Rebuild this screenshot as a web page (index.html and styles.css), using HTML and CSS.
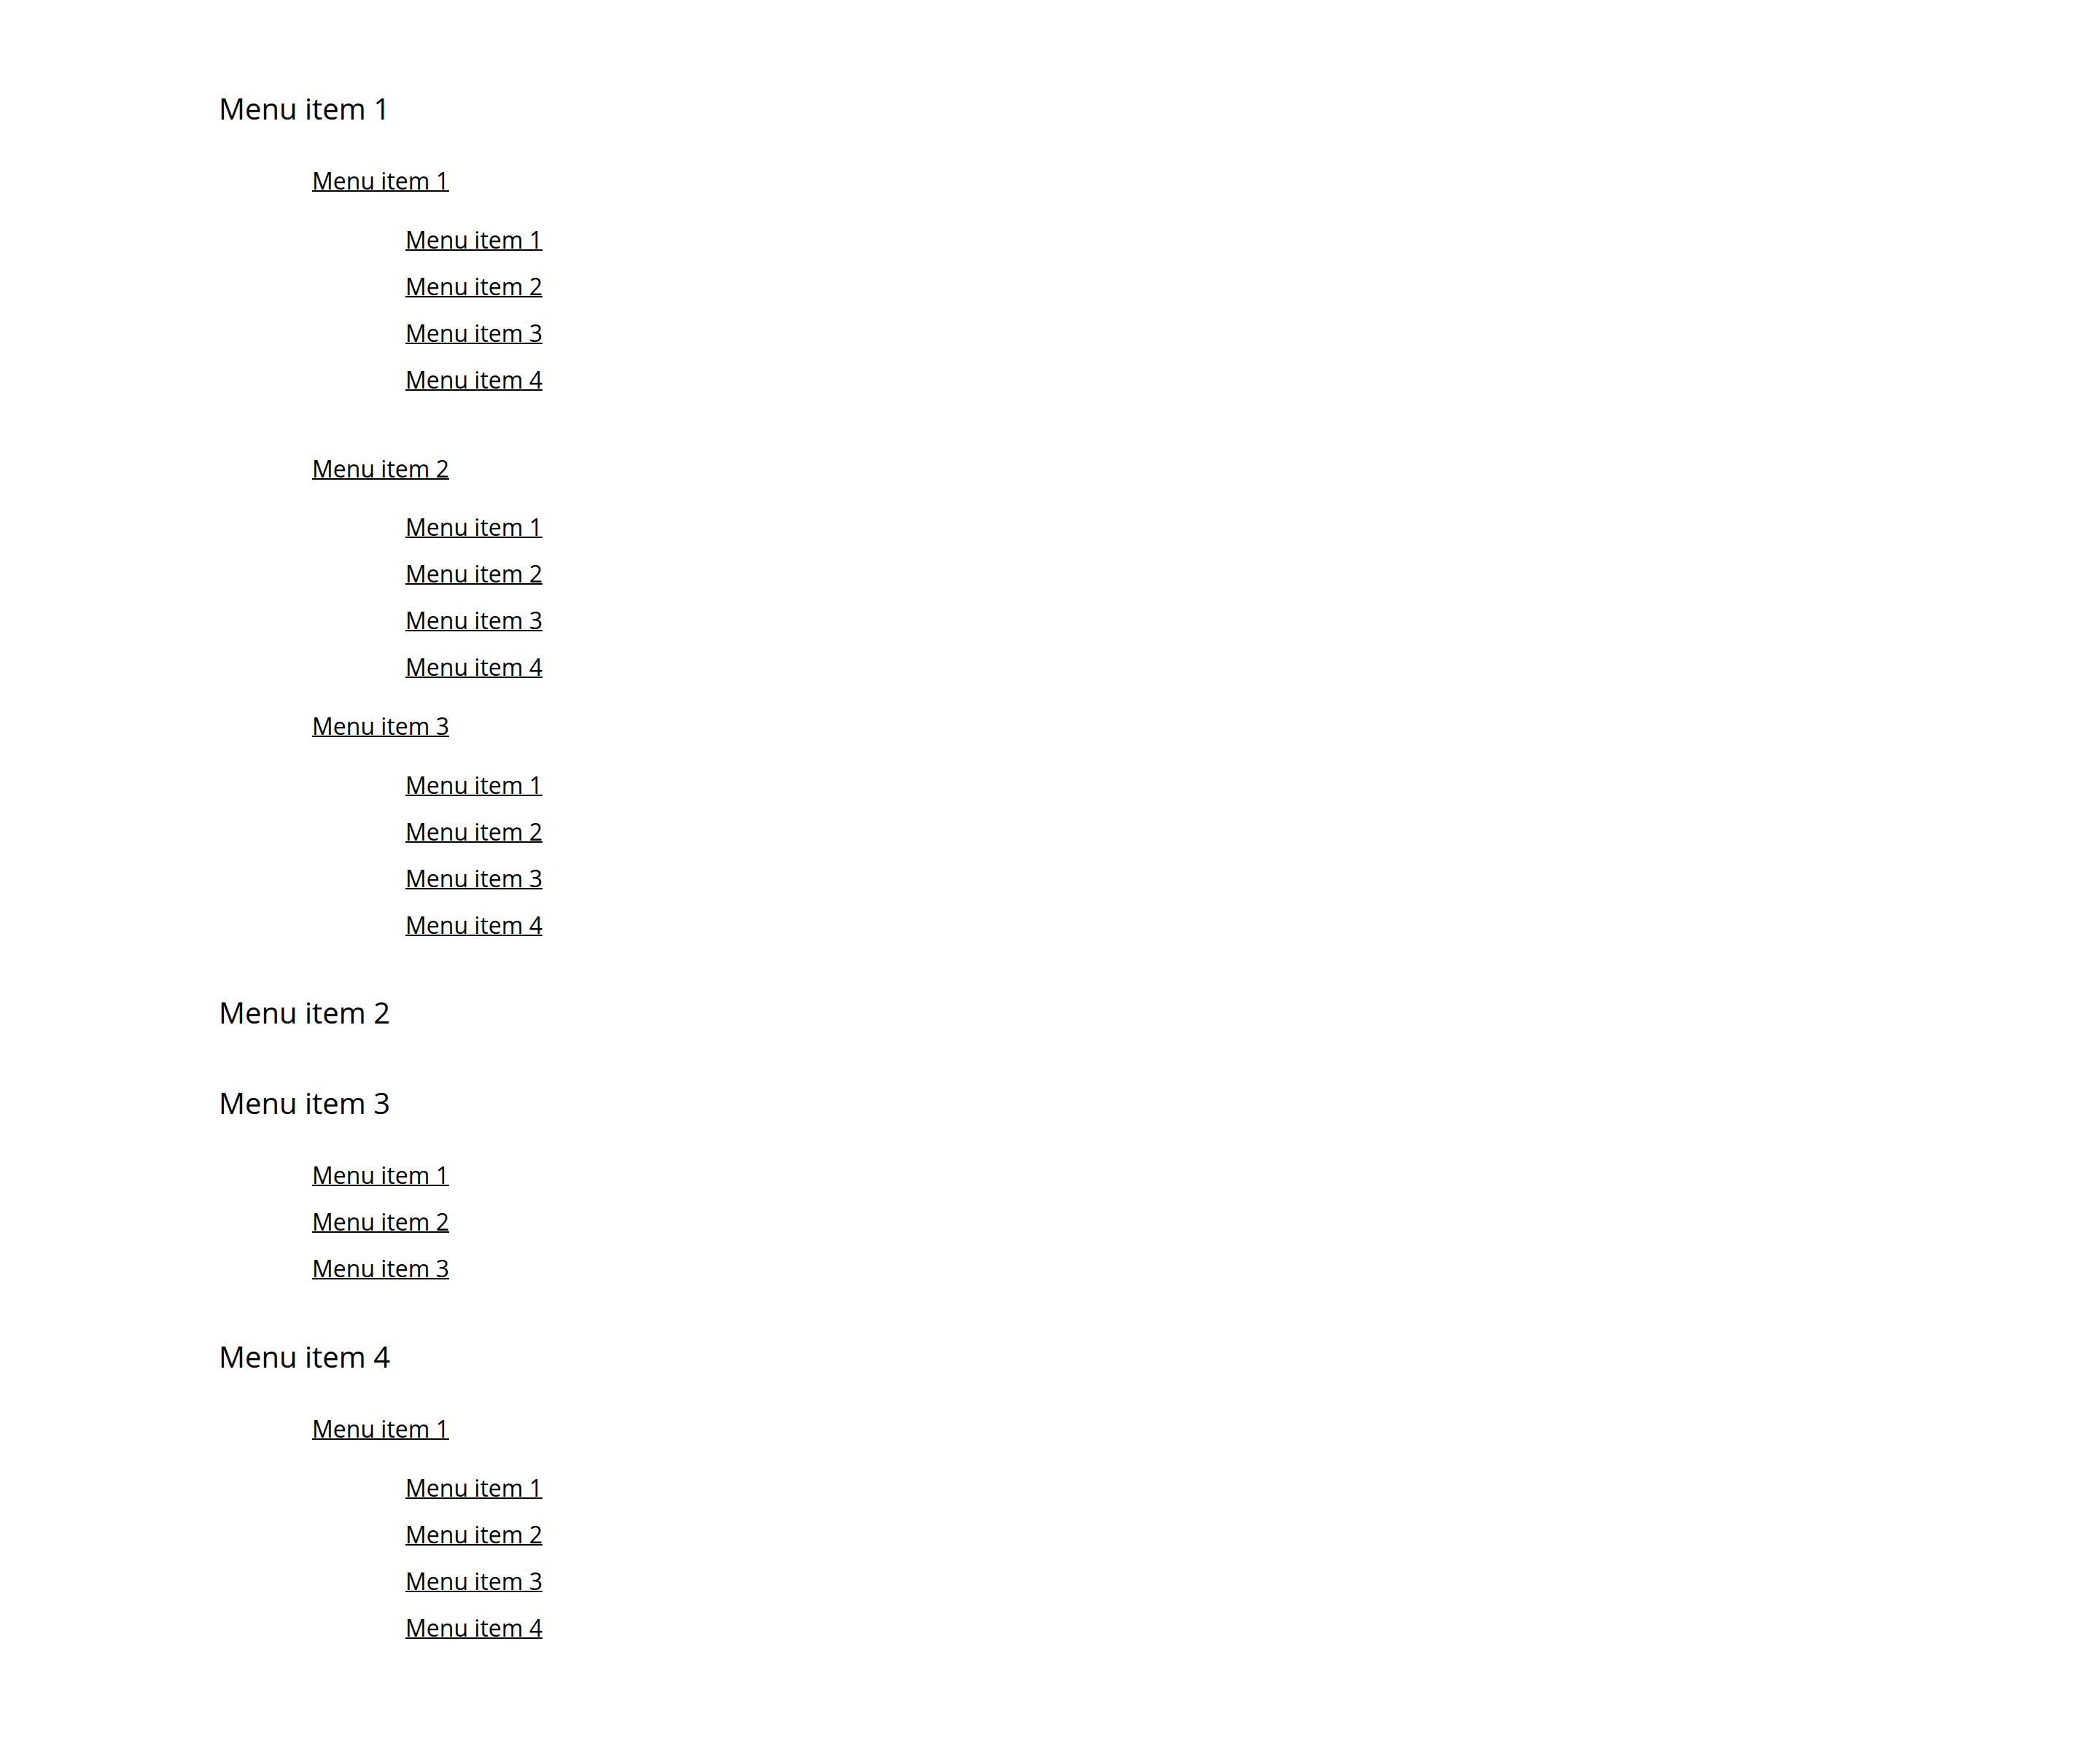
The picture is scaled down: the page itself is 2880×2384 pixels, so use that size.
FILE: index.html
```html
<!DOCTYPE html>
<html lang="en">
<head>
<meta charset="utf-8">
<title>Menu</title>
<link rel="stylesheet" href="styles.css">
</head>
<body>
<nav class="menu">
  <ul class="lvl1">
    <li>
      <span class="label">Menu item 1</span>
      <ul class="lvl2">
        <li>
          <a href="#">Menu item 1</a>
          <ul class="lvl3 lvl3-spaced">
            <li><a href="#">Menu item 1</a></li>
            <li><a href="#">Menu item 2</a></li>
            <li><a href="#">Menu item 3</a></li>
            <li><a href="#">Menu item 4</a></li>
          </ul>
        </li>
        <li>
          <a href="#">Menu item 2</a>
          <ul class="lvl3">
            <li><a href="#">Menu item 1</a></li>
            <li><a href="#">Menu item 2</a></li>
            <li><a href="#">Menu item 3</a></li>
            <li><a href="#">Menu item 4</a></li>
          </ul>
        </li>
        <li>
          <a href="#">Menu item 3</a>
          <ul class="lvl3">
            <li><a href="#">Menu item 1</a></li>
            <li><a href="#">Menu item 2</a></li>
            <li><a href="#">Menu item 3</a></li>
            <li><a href="#">Menu item 4</a></li>
          </ul>
        </li>
      </ul>
    </li>
    <li>
      <span class="label">Menu item 2</span>
    </li>
    <li>
      <span class="label">Menu item 3</span>
      <ul class="lvl2">
        <li><a href="#">Menu item 1</a></li>
        <li><a href="#">Menu item 2</a></li>
        <li><a href="#">Menu item 3</a></li>
      </ul>
    </li>
    <li>
      <span class="label">Menu item 4</span>
      <ul class="lvl2">
        <li>
          <a href="#">Menu item 1</a>
          <ul class="lvl3">
            <li><a href="#">Menu item 1</a></li>
            <li><a href="#">Menu item 2</a></li>
            <li><a href="#">Menu item 3</a></li>
            <li><a href="#">Menu item 4</a></li>
          </ul>
        </li>
      </ul>
    </li>
  </ul>
</nav>
</body>
</html>
```
FILE: styles.css
```css
* {
  box-sizing: border-box;
}

html, body {
  margin: 0;
  background: #ffffff;
}

body {
  font-family: "Open Sans", "Noto Sans", sans-serif;
  color: #000000;
}

.menu {
  padding: 120.5px 0 0 300px;
}

ul {
  list-style: none;
  margin: 0;
  padding: 0;
}

.lvl1 > li {
  font-size: 40px;
  line-height: normal;
  margin-bottom: 68.5px;
}

.label {
  display: block;
}

.lvl2 {
  margin-top: 48.5px;
  padding-left: 128px;
}

.lvl2 > li,
.lvl3 > li {
  font-size: 32px;
  line-height: 48px;
  margin-bottom: 16px;
}

.lvl3 {
  margin-top: 32.5px;
  margin-bottom: 33px;
  padding-left: 128px;
}

.lvl3-spaced {
  margin-bottom: 74px;
}

a {
  color: #000000;
  text-decoration: underline;
  text-decoration-thickness: 2px;
}
```
